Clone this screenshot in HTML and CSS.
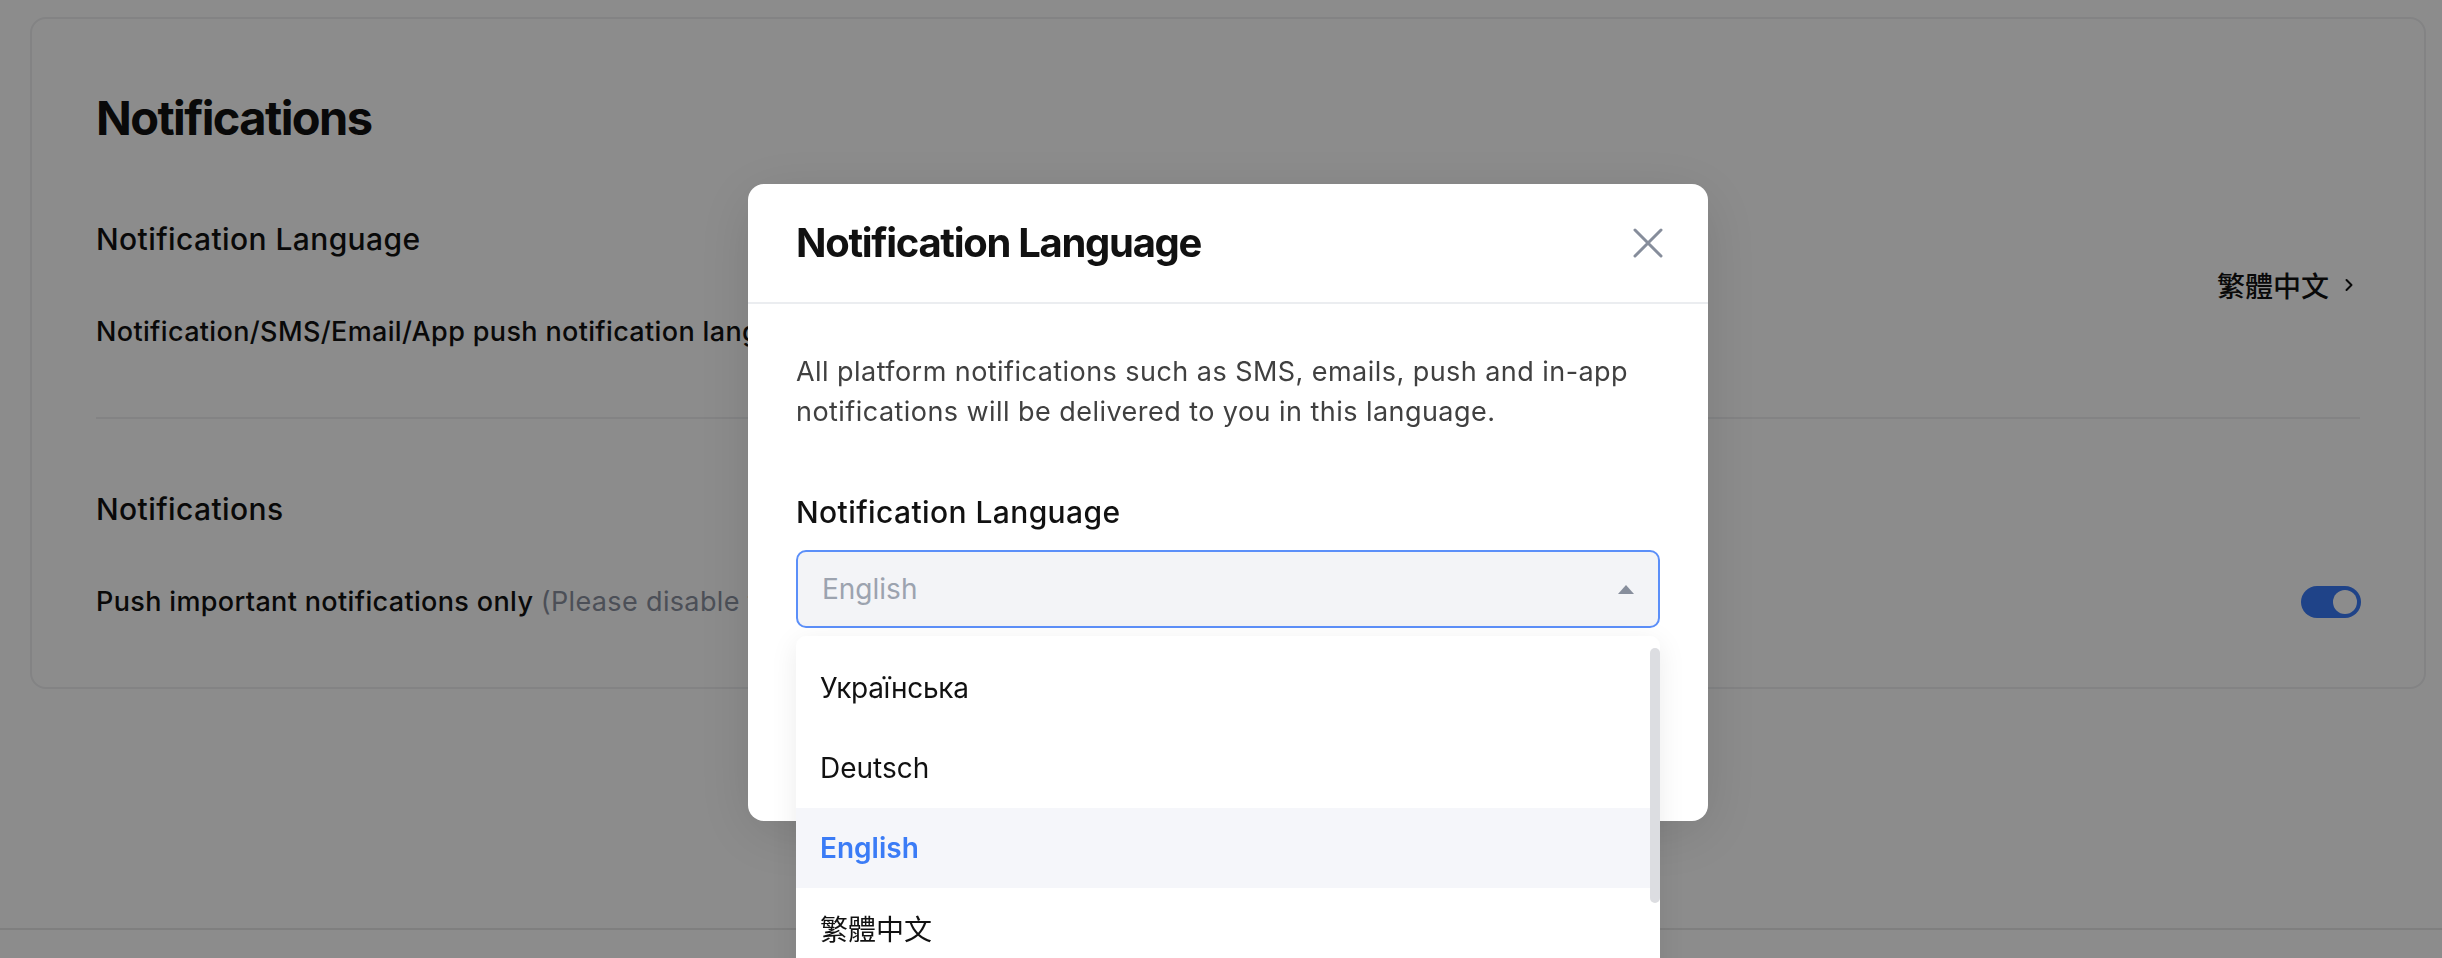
FILE: index.html
```html
<!DOCTYPE html>
<html lang="en">
<head>
<meta charset="utf-8">
<title>Notifications</title>
<link rel="stylesheet" href="styles.css">
</head>
<body>
<main class="page">
  <section class="card">
    <h1 class="card-title">Notifications</h1>
    <div class="setting setting-lang">
      <div class="setting-text">
        <h2 class="setting-title">Notification Language</h2>
        <p class="setting-desc">Notification/SMS/Email/App push notification language</p>
      </div>
      <div class="setting-value">
        <span>繁體中文</span>
        <svg class="chevron" viewBox="0 0 10 16" width="10" height="16" aria-hidden="true"><polyline points="2.5,3 7.5,8 2.5,13" fill="none" stroke="#111" stroke-width="2" stroke-linecap="round" stroke-linejoin="round"/></svg>
      </div>
    </div>
    <div class="setting setting-push">
      <h2 class="setting-title">Notifications</h2>
      <div class="setting-line">
        <p class="setting-desc">Push important notifications only <span class="muted">(Please disable this to receive all)</span></p>
        <span class="toggle"><span class="knob"></span></span>
      </div>
    </div>
  </section>
</main>
<footer class="footer"></footer>

<div class="mask"></div>
<div class="modal" role="dialog">
  <div class="modal-header">
    <h3 class="modal-title">Notification Language</h3>
    <svg class="close" viewBox="0 0 30 30" width="30" height="30" aria-hidden="true"><path d="M2 2 L28 28 M28 2 L2 28" fill="none" stroke="#868d9b" stroke-width="3" stroke-linecap="round"/></svg>
  </div>
  <div class="modal-body">
    <p class="modal-desc">All platform notifications such as SMS, emails, push and in-app notifications will be delivered to you in this language.</p>
    <label class="field-label">Notification Language</label>
    <div class="select-wrap">
      <div class="select">
        <span class="placeholder">English</span>
        <svg class="caret" viewBox="0 0 16 9" width="16" height="9" aria-hidden="true"><polygon points="8,0 16,9 0,9" fill="#878e9c"/></svg>
      </div>
      <div class="dropdown">
        <ul class="options">
          <li class="option">Українська</li>
          <li class="option">Deutsch</li>
          <li class="option selected">English</li>
          <li class="option">繁體中文</li>
          <li class="option">简体中文</li>
          <li class="option">日本語</li>
        </ul>
        <div class="track"><div class="thumb"></div></div>
      </div>
    </div>
  </div>
</div>
</body>
</html>
```
FILE: styles.css
```css
* { box-sizing: border-box; margin: 0; padding: 0; }
html, body { height: 100%; overflow: hidden; }
body {
  font-family: Inter, "Noto Sans CJK TC", sans-serif;
  background: #fff;
  color: #111;
  display: flex;
  flex-direction: column;
}
.page { padding: 17px 16px 0 30px; flex: 1; }
.card {
  border: 2px solid #eeeff1;
  border-radius: 16px;
  padding: 70px 64px 67px;
}
.card-title { font-size: 47px; line-height: 58px; font-weight: 700; letter-spacing: -1.6px; }
.setting-title { font-size: 30px; line-height: 40px; font-weight: 500; letter-spacing: 0.4px; }
.setting-desc { font-size: 27px; line-height: 36px; font-weight: 500; letter-spacing: 0.35px; margin-top: 55px; }
.setting-lang {
  display: flex;
  align-items: center;
  justify-content: space-between;
  padding: 72px 0 67px;
  border-bottom: 2px solid #eeeff1;
}
.setting-value { display: flex; align-items: center; gap: 15px; font-size: 28px; font-weight: 500; margin-right: 6px; }
.setting-push { padding-top: 70px; }
.setting-line { display: flex; align-items: center; justify-content: space-between; margin-top: 55px; }
.setting-line .setting-desc { margin-top: 0; }
.muted { color: #8a919f; font-weight: 400; }
.toggle {
  width: 60px; height: 32px; border-radius: 16px; background: #3a7bf7;
  display: flex; align-items: center; justify-content: flex-end; padding-right: 4px;
  margin-right: -1px;
}
.knob { width: 24px; height: 24px; border-radius: 50%; background: #fff; }
.footer { height: 30px; border-top: 2px solid #e8e8e8; }

.mask { position: fixed; inset: 0; background: rgba(0, 0, 0, 0.45); }
.modal {
  position: fixed; left: 748px; top: 184px; width: 960px; height: 637px;
  background: #fff; border-radius: 16px;
  box-shadow: 0 12px 60px rgba(0, 0, 0, 0.12);
}
.modal-header {
  height: 120px; padding: 0 45px 0 48px;
  display: flex; align-items: center; justify-content: space-between;
  border-bottom: 2px solid #ebedf0;
}
.modal-title { font-size: 40px; line-height: 48px; font-weight: 700; letter-spacing: -1.3px; }
.modal-body { padding: 48px 48px 0; }
.modal-desc { font-size: 27px; line-height: 40px; color: #404040; letter-spacing: 0.45px; }
.field-label { display: block; font-size: 30px; line-height: 36px; font-weight: 500; letter-spacing: 0.4px; margin-top: 62px; }
.select-wrap { position: relative; margin-top: 20px; }
.select {
  height: 78px; border: 2px solid #5b8ff9; border-radius: 10px; background: #f3f4f7;
  display: flex; align-items: center; justify-content: space-between; padding: 0 24px;
}
.placeholder { font-size: 28px; color: #9ca3af; }
.dropdown {
  position: absolute; left: 0; right: 0; top: calc(100% + 8px);
  background: #fff; border-radius: 10px; padding: 12px 0;
  box-shadow: 0 6px 28px rgba(0, 0, 0, 0.08);
  display: flex;
}
.options { list-style: none; flex: 1; }
.option { height: 80px; display: flex; align-items: center; padding-left: 24px; font-size: 28px; }
.option:first-child { letter-spacing: -0.3px; }
.option.selected { background: #f5f6fa; color: #3b7cf6; font-weight: 600; }
.track { width: 10px; }
.thumb { height: 255px; border-radius: 5px; background: #dcdde1; }
```
